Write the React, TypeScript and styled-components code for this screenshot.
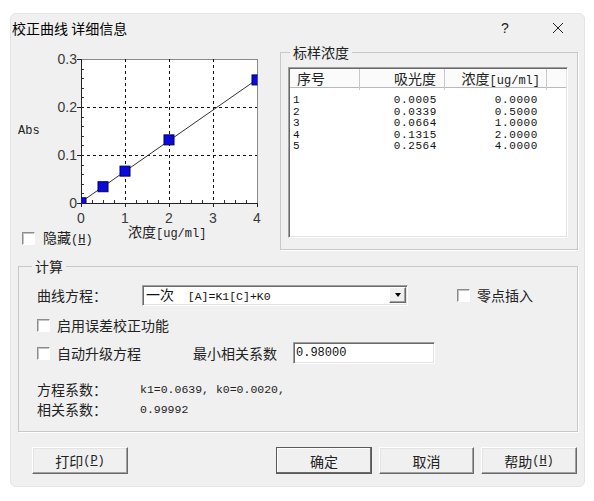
import React from "react";
import styled, { createGlobalStyle } from "styled-components";

const cjk = `"Noto Sans CJK SC", "Noto Sans", sans-serif`;
const mono = `"Liberation Mono", "DejaVu Sans Mono", monospace`;
const sans = `"Liberation Sans", Arial, sans-serif`;

const GlobalStyle = createGlobalStyle`
  html, body {
    margin: 0;
    padding: 0;
    background: #ffffff;
  }
  body {
    font-family: ${cjk};
    color: #111;
  }
`;

const Window = styled.div`
  margin: 13px 0 0 10px;
  width: 575px;
  height: 474px;
  box-sizing: border-box;
  background: #f0f0f0;
  border: 1px solid #e4e4e4;
  border-radius: 6px;
  display: flex;
  flex-direction: column;
  font-family: ${cjk};
  font-size: 14px;
  overflow: hidden;
`;

const TitleBar = styled.div`
  height: 27px;
  display: flex;
  align-items: center;
  padding: 0 3px 0 1px;
`;

const Title = styled.div`
  flex: 1;
  font-size: 14px;
  line-height: 20px;
  color: #000;
`;

const CaptionButton = styled.div`
  width: 46px;
  height: 27px;
  display: flex;
  align-items: center;
  justify-content: center;
  font-family: ${sans};
  font-size: 14px;
  color: #222;
  & + & {
    margin-left: 7px;
  }
`;

const TopRow = styled.div`
  display: flex;
  height: 209px;
`;

const ChartPane = styled.div`
  width: 269px;
  display: flex;
  flex-direction: column;
`;

const ChartSvg = styled.svg`
  display: block;
  margin-top: 4px;
`;

const ChartFoot = styled.div`
  display: grid;
  grid-template-columns: 117px auto;
  align-items: start;
  height: 20px;
`;

const AxisTitle = styled.div`
  line-height: 16px;
  margin-top: -2px;
  font-size: 14px;
  color: #222;
`;

const Mono = styled.span<{ $size?: number }>`
  font-family: ${mono};
  font-size: ${(p) => p.$size ?? 12}px;
`;

const Group = styled.fieldset<{ $w: number; $h: number; $top: number }>`
  margin: ${(p) => p.$top}px 0 0 0;
  padding: 0;
  width: ${(p) => p.$w}px;
  height: ${(p) => p.$h}px;
  box-sizing: border-box;
  min-width: 0;
  border: 1px solid #c8c8c8;
  box-shadow: 1px 1px 0 #ffffff;
`;

const GroupLabel = styled.legend<{ $left: number }>`
  margin-left: ${(p) => p.$left}px;
  padding: 0 3px;
  line-height: 18px;
  height: 18px;
  font-size: 14px;
  color: #222;
`;

const SampleInner = styled.div`
  padding: 6px 9px 11px 7px;
`;

const ListView = styled.div`
  width: 280px;
  height: 171px;
  box-sizing: border-box;
  background: #fff;
  border: 1px solid;
  border-color: #a0a0a0 #ffffff #ffffff #a0a0a0;
  box-shadow: inset 1px 1px 0 #696969, inset -1px -1px 0 #e3e3e3;
  padding: 1px;
  overflow: hidden;
`;

const Columns = styled.div`
  display: grid;
  grid-template-columns: 70px 85px 102px 1fr;
`;

const HeaderRow = styled(Columns)`
  height: 18px;
  background: #fbfbfb;
  border-bottom: 1px solid #b9b9b9;
`;

const HeadCell = styled.div<{ $align?: string; $pl?: number; $pr?: number }>`
  text-align: ${(p) => p.$align ?? "left"};
  padding-left: ${(p) => p.$pl ?? 0}px;
  padding-right: ${(p) => p.$pr ?? 0}px;
  line-height: 18px;
  font-size: 14px;
  color: #222;
  border-right: 1px solid #c9c9c9;
  white-space: nowrap;
  &:last-child {
    border-right: none;
  }
`;

const ListBody = styled.div`
  padding-top: 7px;
`;

const DataRow = styled(Columns)`
  height: 11.6px;
  line-height: 11.6px;
`;

const DataCell = styled.div<{ $align?: string; $pl?: number; $pr?: number }>`
  text-align: ${(p) => p.$align ?? "left"};
  padding-left: ${(p) => p.$pl ?? 0}px;
  padding-right: ${(p) => p.$pr ?? 0}px;
  font-family: ${mono};
  font-size: 11px;
  letter-spacing: 0.6px;
  color: #111;
`;

const CalcGroupWrap = styled.div`
  margin: 7px 6px 0 7px;
`;

const CalcInner = styled.div`
  padding-left: 18px;
  display: flex;
  flex-direction: column;
`;

const Line = styled.div<{ $gap: number; $h: number }>`
  display: flex;
  align-items: center;
  margin-top: ${(p) => p.$gap}px;
  height: ${(p) => p.$h}px;
`;

const FieldLabel = styled.div<{ $w: number }>`
  width: ${(p) => p.$w}px;
  flex: none;
  font-size: 14px;
  line-height: 18px;
  color: #222;
  white-space: nowrap;
`;

const ValueText = styled.div`
  font-family: ${mono};
  font-size: 11.5px;
  color: #222;
  white-space: nowrap;
`;

const Sunken = styled.div<{ $w: number; $h: number }>`
  width: ${(p) => p.$w}px;
  height: ${(p) => p.$h}px;
  box-sizing: border-box;
  background: #fff;
  border: 1px solid;
  border-color: #a0a0a0 #ffffff #ffffff #a0a0a0;
  box-shadow: inset 1px 1px 0 #696969, inset -1px -1px 0 #e3e3e3;
  display: flex;
  align-items: center;
  flex: none;
`;

const ComboText = styled.div`
  flex: 1;
  padding-left: 3px;
  font-size: 14px;
  line-height: 16px;
  color: #111;
  white-space: pre;
`;

const DropButton = styled.div`
  width: 17px;
  height: 16px;
  margin-right: 1px;
  box-sizing: border-box;
  background: #f0f0f0;
  border: 1px solid;
  border-color: #ffffff #696969 #696969 #ffffff;
  box-shadow: inset -1px -1px 0 #a0a0a0;
  display: flex;
  align-items: center;
  justify-content: center;
`;

const Arrow = styled.span`
  width: 0;
  height: 0;
  border-left: 3.5px solid transparent;
  border-right: 3.5px solid transparent;
  border-top: 4px solid #000;
`;

const InputText = styled.div`
  padding-left: 2px;
  font-family: ${mono};
  font-size: 12px;
  color: #111;
`;

const Check = styled.div<{ $w?: number; $gap?: number; $ml?: number }>`
  display: inline-flex;
  align-items: center;
  gap: ${(p) => p.$gap ?? 7}px;
  width: ${(p) => (p.$w ? `${p.$w}px` : "auto")};
  margin-left: ${(p) => p.$ml ?? 0}px;
  flex: none;
  font-size: 14px;
  line-height: 16px;
  color: #222;
  white-space: nowrap;
`;

const CheckBox = styled.span`
  width: 13px;
  height: 13px;
  box-sizing: border-box;
  background: #fff;
  border: 1px solid;
  border-color: #8c8c8c #ffffff #ffffff #8c8c8c;
  box-shadow: inset 1px 1px 0 #c4c4c4;
  flex: none;
`;

const HideCheck = styled(Check)`
  margin-left: 11px;
  margin-top: 4px;
`;

const Key = styled.u`
  font-family: ${mono};
  font-size: 12px;
`;

const Paren = styled.span`
  font-family: ${mono};
  font-size: 12px;
`;

const ButtonRow = styled.div`
  display: flex;
  margin-top: 15px;
  padding: 0 7px 0 21px;
`;

const RightButtons = styled.div`
  display: flex;
  gap: 7px;
  margin-left: auto;
`;

const Button = styled.div<{ $primary?: boolean; $w: number }>`
  width: ${(p) => p.$w}px;
  height: 27px;
  box-sizing: border-box;
  display: flex;
  align-items: center;
  justify-content: center;
  background: #f0f0f0;
  font-size: 14px;
  color: #222;
  border: 1px solid;
  border-color: ${(p) =>
    p.$primary ? "#5a5a5a" : "#ffffff #696969 #696969 #ffffff"};
  box-shadow: ${(p) =>
    p.$primary
      ? "inset -1px -1px 0 #696969, inset 1px 1px 0 #ffffff"
      : "inset -1px -1px 0 #a0a0a0, inset 1px 1px 0 #e3e3e3"};
`;

const points: [number, number][] = [
  [0, 0.0005],
  [0.5, 0.0339],
  [1, 0.0664],
  [2, 0.1315],
  [4, 0.2564],
];

const rows = [
  ["1", "0.0005", "0.0000"],
  ["2", "0.0339", "0.5000"],
  ["3", "0.0664", "1.0000"],
  ["4", "0.1315", "2.0000"],
  ["5", "0.2564", "4.0000"],
];

// plot area inside the svg
const X0 = 70;
const X1 = 246;
const Y0 = 158;
const Y1 = 14;
const sx = (v: number) => X0 + v * 44;
const sy = (v: number) => Y0 - v * 480;

const Chart = () => {
  const minorY: number[] = [];
  for (let i = 1; i < 15; i++) if (i % 5 !== 0) minorY.push(sy(i * 0.02));
  const minorX: number[] = [];
  for (let i = 1; i < 16; i++) if (i % 4 !== 0) minorX.push(sx(i * 0.25));

  return (
    <ChartSvg width={262} height={180} viewBox="0 0 262 180">
      <defs>
        <clipPath id="plotClip">
          <rect x={X0} y={Y1} width={X1 - X0 + 0.5} height={Y0 - Y1 + 0.5} />
        </clipPath>
      </defs>
      <rect x={X0 + 0.5} y={Y1 + 0.5} width={X1 - X0} height={Y0 - Y1} fill="#fff" stroke="#8a8a8a" />
      {[1, 2, 3].map((v) => (
        <line key={"gx" + v} x1={sx(v) + 0.5} x2={sx(v) + 0.5} y1={Y1} y2={Y0} stroke="#111" strokeDasharray="3 3" />
      ))}
      {[0.1, 0.2].map((v) => (
        <line key={"gy" + v} x1={X0} x2={X1} y1={sy(v) + 0.5} y2={sy(v) + 0.5} stroke="#111" strokeDasharray="3 3" />
      ))}
      {minorY.map((y) => (
        <line key={"my" + y} x1={X0} x2={X0 + 3} y1={Math.round(y) + 0.5} y2={Math.round(y) + 0.5} stroke="#333" />
      ))}
      {minorX.map((x) => (
        <line key={"mx" + x} x1={Math.round(x) + 0.5} x2={Math.round(x) + 0.5} y1={Y0 - 3} y2={Y0} stroke="#333" />
      ))}
      <line x1={X0 + 0.5} x2={X0 + 0.5} y1={Y1} y2={Y0 + 1} stroke="#222" />
      <line x1={X0} x2={X1 + 1} y1={Y0 + 0.5} y2={Y0 + 0.5} stroke="#222" />
      {[0, 0.1, 0.2, 0.3].map((v) => (
        <g key={"ty" + v}>
          <line x1={X0 - 4} x2={X0} y1={sy(v) + 0.5} y2={sy(v) + 0.5} stroke="#222" />
          <text x={X0 - 4} y={sy(v) + 5} textAnchor="end" fontFamily={sans} fontSize={14} fill="#3a3a3a">
            {v === 0 ? "0" : v.toFixed(1)}
          </text>
        </g>
      ))}
      {[0, 1, 2, 3, 4].map((v) => (
        <g key={"tx" + v}>
          <line x1={sx(v) + 0.5} x2={sx(v) + 0.5} y1={Y0} y2={Y0 + 4} stroke="#222" />
          <text x={sx(v)} y={Y0 + 20} textAnchor="middle" fontFamily={sans} fontSize={14} fill="#3a3a3a">
            {v}
          </text>
        </g>
      ))}
      <text x={7} y={89} fontFamily={mono} fontSize={12} fill="#222">
        Abs
      </text>
      <g clipPath="url(#plotClip)">
        <line x1={sx(0)} y1={sy(0.002)} x2={sx(4)} y2={sy(0.2576)} stroke="#333" strokeWidth={1} />
        {points.map(([c, a]) => (
          <rect
            key={"p" + c}
            x={sx(c) - 5}
            y={sy(a) - 5}
            width={10}
            height={10}
            fill="#0a0adc"
            stroke="#00005a"
            strokeWidth={1}
          />
        ))}
      </g>
    </ChartSvg>
  );
};

const App = () => {
  return (
    <>
      <GlobalStyle />
      <Window>
        <TitleBar>
          <Title>校正曲线 详细信息</Title>
          <CaptionButton>?</CaptionButton>
          <CaptionButton>
            <svg width="12" height="12" viewBox="0 0 12 12">
              <path d="M1 1 L11 11 M11 1 L1 11" stroke="#222" strokeWidth="1" fill="none" />
            </svg>
          </CaptionButton>
        </TitleBar>

        <TopRow>
          <ChartPane>
            <Chart />
            <ChartFoot>
              <HideCheck $gap={8}>
                <CheckBox />
                <span>
                  隐藏<Paren>(</Paren>
                  <Key>H</Key>
                  <Paren>)</Paren>
                </span>
              </HideCheck>
              <AxisTitle>
                浓度<Mono>[ug/ml]</Mono>
              </AxisTitle>
            </ChartFoot>
          </ChartPane>

          <Group $w={298} $h={207} $top={2}>
            <GroupLabel $left={9}>标样浓度</GroupLabel>
            <SampleInner>
              <ListView>
                <HeaderRow>
                  <HeadCell $pl={7}>序号</HeadCell>
                  <HeadCell $align="right" $pr={8}>
                    吸光度
                  </HeadCell>
                  <HeadCell $align="right" $pr={6}>
                    浓度<Mono>[ug/ml]</Mono>
                  </HeadCell>
                  <HeadCell />
                </HeaderRow>
                <ListBody>
                  {rows.map(([n, a, c]) => (
                    <DataRow key={n}>
                      <DataCell $pl={3}>{n}</DataCell>
                      <DataCell $align="right" $pr={8}>
                        {a}
                      </DataCell>
                      <DataCell $align="right" $pr={9}>
                        {c}
                      </DataCell>
                      <DataCell />
                    </DataRow>
                  ))}
                </ListBody>
              </ListView>
            </SampleInner>
          </Group>
        </TopRow>

        <CalcGroupWrap>
          <Group $w={560} $h={175} $top={0}>
            <GroupLabel $left={13}>计算</GroupLabel>
            <CalcInner>
              <Line $gap={10} $h={20}>
                <FieldLabel $w={105}>曲线方程：</FieldLabel>
                <Sunken $w={266} $h={21}>
                  <ComboText>
                    一次<Mono $size={11.5}>  [A]=K1[C]+K0</Mono>
                  </ComboText>
                  <DropButton>
                    <Arrow />
                  </DropButton>
                </Sunken>
                <Check $ml={49}>
                  <CheckBox />
                  零点插入
                </Check>
              </Line>
              <Line $gap={12} $h={16}>
                <Check>
                  <CheckBox />
                  启用误差校正功能
                </Check>
              </Line>
              <Line $gap={9} $h={22}>
                <Check $w={156}>
                  <CheckBox />
                  自动升级方程
                </Check>
                <FieldLabel $w={100}>最小相关系数</FieldLabel>
                <Sunken $w={142} $h={22}>
                  <InputText>0.98000</InputText>
                </Sunken>
              </Line>
              <Line $gap={16} $h={18}>
                <FieldLabel $w={103}>方程系数：</FieldLabel>
                <ValueText>k1=0.0639, k0=0.0020,</ValueText>
              </Line>
              <Line $gap={2} $h={18}>
                <FieldLabel $w={103}>相关系数：</FieldLabel>
                <ValueText>0.99992</ValueText>
              </Line>
            </CalcInner>
          </Group>
        </CalcGroupWrap>

        <ButtonRow>
          <Button $w={96}>
            打印<Paren>(</Paren>
            <Key>P</Key>
            <Paren>)</Paren>
          </Button>
          <RightButtons>
            <Button $w={96} $primary>
              确定
            </Button>
            <Button $w={95}>取消</Button>
            <Button $w={96}>
              帮助<Paren>(</Paren>
              <Key>H</Key>
              <Paren>)</Paren>
            </Button>
          </RightButtons>
        </ButtonRow>
      </Window>
    </>
  );
};

export default App;
